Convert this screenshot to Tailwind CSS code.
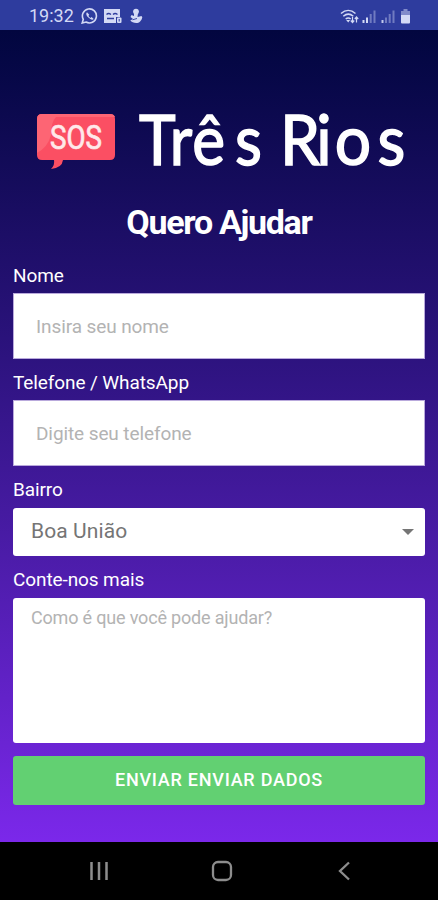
<!DOCTYPE html>
<html lang="pt-BR">
<head>
    <meta charset="UTF-8">
    <meta name="viewport" content="width=device-width, initial-scale=1.0">
    <title>SOS Três Rios</title>
    <script src="https://cdn.jsdelivr.net/npm/@tailwindcss/browser@4"></script>
</head>
<body class="h-screen flex flex-col overflow-hidden bg-black font-[Roboto,sans-serif] text-white">

    <!-- Status bar -->
    <header class="flex h-[30px] shrink-0 items-center justify-between bg-[#2e3c9e] pt-0.5 pr-[27px] pl-[29px] text-[#d3d9f5]">
        <div class="flex items-center">
            <span class="w-[52px] text-[18px] leading-none">19:32</span>
            <svg class="h-4 w-[17px]" viewBox="0 0 17 16" fill="none" stroke="currentColor" stroke-width="1.6">
                <path d="M1.2 15l1.1-3.7A7 7 0 1 1 5 14z"/>
                <path d="M6 4.200c-1.400 1.200-.7 3.400 1.400 5.400s4.300 2.700 5.300 1.300l-2.100-1.900-1.100.9c-.9-.4-1.700-1.200-2-2.100l.8-1.100z" fill="currentColor" stroke="none"/>
            </svg>
            <svg class="ml-1.5 h-4 w-[18px]" viewBox="0 0 18 16">
                <path d="M0 1h16v8h-4v6H0z" fill="currentColor"/>
                <path d="M2.500 6.500q2-2 4.500 0M9 6.500q2-2 4.500 0M3 10.500h7" stroke="#2e3c9e" stroke-width="1.300" fill="none"/>
                <rect x="13" y="9.500" width="4.500" height="5.500" rx="1" fill="currentColor"/>
                <path d="M15.200 11v2.500" stroke="#2e3c9e"/>
            </svg>
            <svg class="ml-[7px] h-4 w-[14px]" viewBox="0 0 14 16" fill="currentColor">
                <circle cx="7" cy="3.600" r="2.900"/>
                <path d="M5 5h4l-.5 4 4-1 .8 1.200c-.7 3.500-3 5.800-6 5.800-2.700 0-4.800-1-6-2.500L4 11 1.500 9 2.500 7l2.500 1z"/>
                <path d="M3.500 11.800l4.500-1.300" stroke="#2e3c9e" stroke-width=".9"/>
            </svg>
        </div>
        <div class="flex items-center">
            <svg class="h-[17px] w-[19px]" viewBox="0 0 19 17" fill="none" stroke="currentColor" stroke-width="1.500">
                <path d="M1 5.500c4.500-4 10-4 14.500 0M3.300 8.300c3-2.600 7-2.600 10 0M5.700 11c1.500-1.300 3.500-1.300 5 0"/>
                <path d="M8.200 14.500l-2-2.500h4z" fill="currentColor" stroke="none"/>
                <path d="M12.500 9v5M16.500 14.500v-5M10.800 12.500l1.700 2 1.700-2M14.800 11l1.700-2 1.700 2" stroke-width="1.200"/>
            </svg>
            <svg class="ml-[3px] h-[17px] w-[14px]" viewBox="0 0 14 17" stroke="currentColor" stroke-width="2">
                <path d="M1.500 15v-3M5 15V9.500"/>
                <path d="M8.700 15V6M12.500 15V2.500" opacity=".4"/>
            </svg>
            <svg class="ml-[5px] h-[17px] w-[14px]" viewBox="0 0 14 17" stroke="currentColor" stroke-width="2">
                <path d="M1.500 15v-3" opacity=".9"/>
                <path d="M5 15V9.500M8.700 15V6M12.500 15V2.500" opacity=".4"/>
            </svg>
            <svg class="ml-[5px] h-[17px] w-[11px]" viewBox="0 0 11 17" fill="currentColor">
                <path d="M3.500 1h4v2H10v4H1V3h2.500z" opacity=".5"/>
                <path d="M1 7h9v7.500a1 1 0 0 1-1 1H2a1 1 0 0 1-1-1z"/>
            </svg>
        </div>
    </header>

    <main class="flex h-[812px] shrink-0 flex-col bg-linear-to-b from-[#02063f] from-0% via-[#2a127b] via-38% to-[#7b28ea] to-100% px-[13px]">

        <!-- Logo -->
        <svg class="mt-[70px] ml-[13px] h-[90px] w-[390px] shrink-0 overflow-visible" viewBox="26 100 390 90">
            <path d="M42 114h68q5 0 5 5v36q0 5-5 5H63q-1 8-12 9 4-4 3-9H42q-5 0-5-5v-36q0-5 5-5z" fill="#fb4f63"/>
            <path d="M42 114h68q4 0 5 3H56q-5 5-5 18-3 12-14 18v-34q0-5 5-5z" fill="#fd6574"/>
            <text x="50" y="149" textLength="52" lengthAdjust="spacingAndGlyphs" font-family="Roboto" font-size="33" fill="#ffe9ea" stroke="#ffe9ea" stroke-width=".7">SOS</text>
            <g font-family="Lato" font-size="69" fill="#fff" stroke="#fff" stroke-width="1.500">
                <text transform="scale(.9 1)" x="154.500 188.500 213.500 261" y="165">Três</text>
                <text transform="scale(.93 1)" x="301 340 360 406" y="165">Rios</text>
            </g>
        </svg>

        <h1 class="mt-1 text-center text-[34px] leading-[56px] font-bold tracking-[-1.300px]">Quero Ajudar</h1>

        <form class="flex flex-col">
            <label for="nome" class="mt-[15px] text-[19px] leading-[22px] tracking-[-0.100px]">Nome</label>
            <input id="nome" type="text" placeholder="Insira seu nome" class="mt-1.5 h-[66px] border border-[#b9a9dc] bg-white px-[22px] text-[19px] tracking-[-0.100px] text-gray-700 placeholder:text-[#b3b3b3]">

            <label for="telefone" class="mt-[13px] text-[19px] leading-[22px] tracking-[-0.100px]">Telefone / WhatsApp</label>
            <input id="telefone" type="tel" placeholder="Digite seu telefone" class="mt-1.5 h-[66px] border border-[#b9a9dc] bg-white px-[22px] text-[19px] tracking-[-0.100px] text-gray-700 placeholder:text-[#b3b3b3]">

            <label for="bairro" class="mt-[13px] text-[19px] leading-[22px] tracking-[-0.100px]">Bairro</label>
            <button id="bairro" type="button" class="mt-[7px] flex h-12 items-center justify-between rounded-[3px] bg-white pr-[11px] pl-[18px] text-[21px] tracking-[0.100px] text-[#757575]">
                <span>Boa União</span>
                <svg class="h-1.5 w-3" viewBox="0 0 12 6" fill="currentColor"><path d="M0 0h12L6 6z"/></svg>
            </button>

            <label for="mais" class="mt-[13px] text-[19px] leading-[22px] tracking-[-0.100px]">Conte-nos mais</label>
            <textarea id="mais" placeholder="Como é que você pode ajudar?" class="mt-[7px] h-[145px] resize-none rounded-[3px] bg-white px-[18px] py-2 text-[18px] leading-6 tracking-[-0.180px] text-gray-700 placeholder:text-[#b3b3b3]"></textarea>

            <button type="submit" class="mt-[13px] h-[49px] rounded-[3px] bg-[#62d072] pb-0.5 text-[18px] font-medium tracking-[0.750px]">ENVIAR ENVIAR DADOS</button>
        </form>
    </main>

    <!-- Navigation bar -->
    <nav class="grid flex-1 grid-cols-[20px_22px_14px] items-center justify-start gap-x-[104px] pl-[89px] text-[#8d8d8d]">
        <svg class="h-5 w-5" viewBox="0 0 20 20" stroke="currentColor" stroke-width="2.500"><path d="M2.500 1v18M10 1v18M17.500 1v18"/></svg>
        <svg class="-ml-0.5 h-[22px] w-[22px]" viewBox="0 0 22 22" fill="none" stroke="currentColor" stroke-width="2.300"><rect x="2" y="2" width="18" height="18" rx="5"/></svg>
        <svg class="-ml-0.5 h-5 w-[14px]" viewBox="0 0 14 20" fill="none" stroke="currentColor" stroke-width="2.300"><path d="M12 1.500L3 10l9 8.500"/></svg>
    </nav>

</body>
</html>
